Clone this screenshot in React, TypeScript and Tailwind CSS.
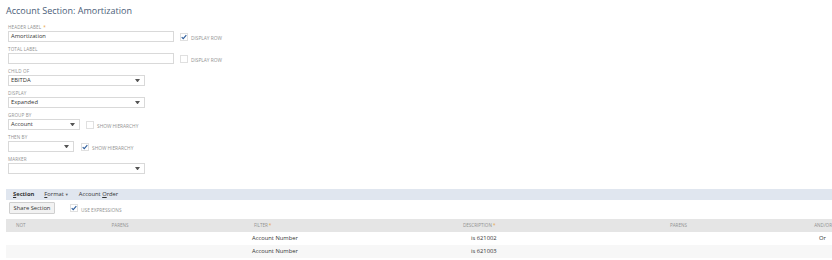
import React from "react";

const font = { fontFamily: '"Open Sans", "Liberation Sans", sans-serif' };

function Label({ children, req }: { children: React.ReactNode; req?: boolean }) {
  return (
    <div className="h-[6px] text-[4.6px] leading-[6px] uppercase tracking-[0.1px] text-[#929292]">
      {children}
      {req && <span className="text-[#e8a33b] ml-[2px]">*</span>}
    </div>
  );
}

function Check({ checked, label }: { checked?: boolean; label: string }) {
  return (
    <div className="flex items-center h-[11px]">
      <div className="w-[8px] h-[8px] border border-[#e0e0e0] bg-white flex items-center justify-center">
        {checked && (
          <svg width="7" height="6" viewBox="0 0 7 6">
            <path d="M0.8 3.2 L2.6 5 L6.2 0.8" stroke="#2f5e9c" strokeWidth="1.3" fill="none" />
          </svg>
        )}
      </div>
      <span className="ml-[3px] text-[4.8px] leading-[6px] uppercase text-[#929292] mt-[3px]">{label}</span>
    </div>
  );
}

function Select({ value, w }: { value?: string; w: string }) {
  return (
    <div className={`${w} h-[11px] border border-[#d9d9d9] bg-white flex items-center justify-between pl-[2px] pr-[4px]`}>
      <span className="text-[5.8px] text-[#333]">{value}</span>
      <svg width="5" height="3.5" viewBox="0 0 6 4">
        <path d="M0 0 H6 L3 4 Z" fill="#555" />
      </svg>
    </div>
  );
}

function Input({ value }: { value?: string }) {
  return (
    <div className="w-[166px] h-[11px] border border-[#d9d9d9] bg-white flex items-center pl-[2px]">
      <span className="text-[5.8px] text-[#333]">{value}</span>
    </div>
  );
}

export default function App() {
  return (
    <div className="w-[832px] h-[260px] bg-white overflow-hidden" style={font}>
      <div className="pl-[6px] pt-[4px] text-[9px] leading-[14px] text-[#4b5e78]">Account Section: Amortization</div>

      <div className="pl-[8px] pt-[6px] flex flex-col">
        <Label req>Header Label</Label>
        <div className="flex items-center mt-[1px]">
          <Input value="Amortization" />
          <div className="ml-[6px]"><Check checked label="Display Row" /></div>
        </div>

        <div className="mt-[4px]"><Label>Total Label</Label></div>
        <div className="flex items-center mt-[1px]">
          <Input />
          <div className="ml-[6px]"><Check label="Display Row" /></div>
        </div>

        <div className="mt-[4px]"><Label>Child Of</Label></div>
        <div className="mt-[1px]"><Select value="EBITDA" w="w-[137px]" /></div>

        <div className="mt-[4px]"><Label>Display</Label></div>
        <div className="mt-[1px]"><Select value="Expanded" w="w-[137px]" /></div>

        <div className="mt-[4px]"><Label>Group By</Label></div>
        <div className="flex items-center mt-[1px]">
          <Select value="Account" w="w-[72px]" />
          <div className="ml-[6px]"><Check label="Show Hierarchy" /></div>
        </div>

        <div className="mt-[4px]"><Label>Then By</Label></div>
        <div className="flex items-center mt-[1px]">
          <Select w="w-[66px]" />
          <div className="ml-[7px]"><Check checked label="Show Hierarchy" /></div>
        </div>

        <div className="mt-[4px]"><Label>Marker</Label></div>
        <div className="mt-[1px]"><Select w="w-[137px]" /></div>
      </div>

      <div className="ml-[6px] mt-[15px] h-[11px] bg-[#e0e6ef] flex items-center pl-[7px] gap-[10px] text-[5.8px] text-[#333]">
        <span className="font-bold"><span className="underline">S</span>ection</span>
        <span><span className="underline">F</span>ormat<span className="text-[4px] ml-[1px] text-[#666]">▼</span></span>
        <span>Account <span className="underline">O</span>rder</span>
      </div>

      <div className="flex items-center pl-[9px] mt-[2px]">
        <div className="h-[12px] w-[46px] border border-[#cfcfcf] bg-[#f2f2f2] rounded-[1px] flex items-center justify-center text-[5.8px] text-[#333]">Share Section</div>
        <div className="ml-[15px]"><Check checked label="Use Expressions" /></div>
      </div>

      <div className="ml-[6px] mt-[5px]">
        <div className="h-[13px] bg-[#e5e5e5] flex items-center text-[4.6px] uppercase text-[#929292]">
          <div className="w-[104px] pl-[10px]">Not</div>
          <div className="w-[140px] pl-[2px]">Parens</div>
          <div className="w-[212px] pl-[5px]">Filter<span className="text-[#e8a33b] ml-[1px]">*</span></div>
          <div className="w-[208px] pl-[3px]">Description<span className="text-[#e8a33b] ml-[1px]">*</span></div>
          <div className="w-[140px] pl-[3px]">Parens</div>
          <div className="pl-[8px]">And/Or</div>
        </div>
        <div className="h-[13px] bg-white flex items-center text-[5.8px] text-[#333]">
          <div className="w-[244px]" />
          <div className="w-[218px] pl-[2px]">Account Number</div>
          <div className="w-[348px] pl-[3px]">is 621002</div>
          <div className="pl-[3px]">Or</div>
        </div>
        <div className="h-[13px] bg-[#f7f7f7] flex items-center text-[5.8px] text-[#333]">
          <div className="w-[244px]" />
          <div className="w-[218px] pl-[2px]">Account Number</div>
          <div className="w-[348px] pl-[3px]">is 621003</div>
        </div>
      </div>
    </div>
  );
}
